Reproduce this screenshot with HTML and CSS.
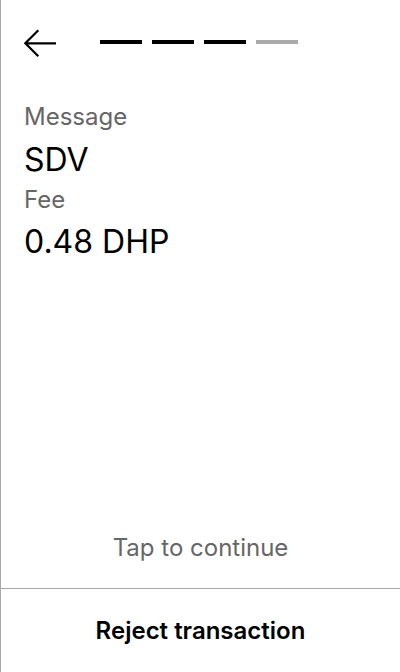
FILE: index.html
```html
<!DOCTYPE html>
<html>
<head>
<meta charset="utf-8">
<link rel="stylesheet" href="styles.css">
</head>
<body>
<div class="screen">
  <header class="header">
    <button class="back" aria-label="Back">
      <svg width="34" height="32" viewBox="0 0 34 32"><path d="M32 17.3H2M14.3 4.3L1.3 17.3l13 13" fill="none" stroke="#000" stroke-width="2.2"/></svg>
    </button>
    <div class="steps">
      <span class="step done"></span>
      <span class="step done"></span>
      <span class="step done"></span>
      <span class="step"></span>
    </div>
  </header>
  <main class="content">
    <div class="label">Message</div>
    <div class="value">SDV</div>
    <div class="label">Fee</div>
    <div class="value">0.48 DHP</div>
  </main>
  <div class="tap">Tap to continue</div>
  <footer class="footer">
    <button class="reject">Reject transaction</button>
  </footer>
</div>
</body>
</html>
```
FILE: styles.css
```css
html, body {
  margin: 0;
  padding: 0;
  background: #fff;
}
body {
  font-family: Inter, "Noto Sans", sans-serif;
  color: #000;
}
.screen {
  width: 399px;
  height: 672px;
  border-left: 1px solid #a8a8a8;
  display: flex;
  flex-direction: column;
}
.header {
  display: flex;
  align-items: center;
  height: 84px;
  padding-left: 23px;
}
.back {
  border: 0;
  background: none;
  padding: 0;
  width: 34px;
  height: 32px;
  display: flex;
}
.steps {
  display: flex;
  gap: 10px;
  margin-left: 42px;
}
.step {
  width: 42px;
  height: 4px;
  background: #aaa;
}
.step.done {
  background: #000;
}
.content {
  padding: 18px 23px 0;
  flex: 1;
}
.label {
  font-size: 24px;
  color: #666;
  line-height: 29px;
  margin-bottom: 8px;
}
.label:first-child {
  margin-bottom: 9px;
}
.value {
  font-size: 32px;
  line-height: 39px;
  margin-bottom: 6px;
}
.tap {
  text-align: center;
  font-size: 24px;
  line-height: 29px;
  color: #666;
  padding-bottom: 26px;
}
.footer {
  border-top: 1px solid #a8a8a8;
  height: 83px;
  display: flex;
}
.reject {
  flex: 1;
  border: 0;
  background: none;
  padding: 0;
  font-family: inherit;
  font-size: 24px;
  line-height: 29px;
  font-weight: 600;
  color: #000;
}
```
